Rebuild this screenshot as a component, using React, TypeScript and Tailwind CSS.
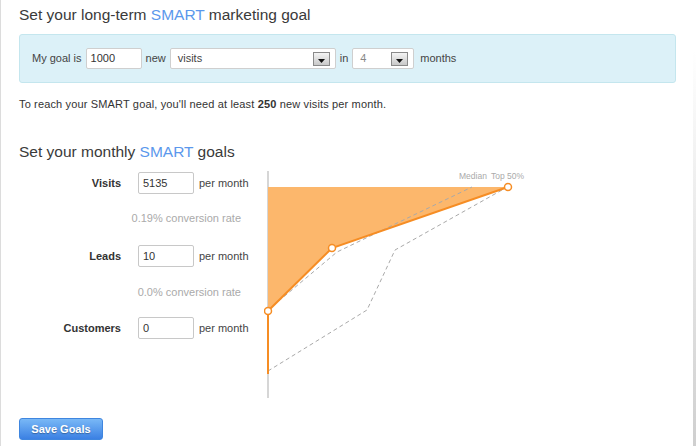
import { ReactNode } from "react";

const font = { fontFamily: '"Liberation Sans", Arial, sans-serif' };

const SelectArrow = () => (
  <span className="flex h-[14px] w-[17px] items-end justify-center border border-[#8a8a8a] bg-gradient-to-b from-[#f4f4f4] to-[#c9c9c9] pb-[2px]">
    <svg width="7" height="4" viewBox="0 0 7 4">
      <path d="M0 0h7L3.5 4z" fill="#111" />
    </svg>
  </span>
);

const FakeSelect = ({ value, width, muted }: { value: string; width: string; muted?: boolean }) => (
  <div className={`flex h-[21px] items-center justify-between rounded-[2px] border border-[#cfcfcf] bg-white pl-[7px] pr-[5px] ${width}`}>
    <span className={muted ? "text-[#888]" : "text-[#444]"}>{value}</span>
    <SelectArrow />
  </div>
);

const Title = ({ children }: { children: ReactNode }) => (
  <h2 className="h-[20px] text-[15.5px] leading-[20px] text-[#3a3a3a]">{children}</h2>
);

const GoalRow = ({ label, value }: { label: string; value: string }) => (
  <div className="flex h-[22px] items-center">
    <span className="w-[102px] text-right text-[11px] font-bold text-[#333]">{label}</span>
    <div className="ml-[17px] flex h-[22px] w-[56px] items-center rounded-[2px] border border-[#c8c8c8] bg-white px-[4px] text-[11px] text-[#333]">
      {value}
    </div>
    <span className="ml-[5px] text-[11px] text-[#444]">per month</span>
  </div>
);

const Rate = ({ text, className }: { text: string; className: string }) => (
  <div className={`flex h-[14px] w-[222px] items-center justify-end text-[11px] text-[#aaa] ${className}`}>{text}</div>
);

const Chart = () => (
  <svg width="270" height="234" viewBox="0 0 270 234" className="-mt-[3px] ml-[-3px]">
    <line x1="4" y1="3" x2="4" y2="230" stroke="#c8c8c8" strokeWidth="1.5" />
    <polygon points="4,19 244,19 68,80 4,143" fill="#fcb76c" />
    <polyline points="4,142 73,84 208,19" fill="none" stroke="#a9a9a9" strokeWidth="1" strokeDasharray="4 3" />
    <polyline points="4,203 103,142 131,82 238,22" fill="none" stroke="#a9a9a9" strokeWidth="1" strokeDasharray="4 3" />
    <polyline points="4,206 4,143 68,80 244,19" fill="none" stroke="#f68d24" strokeWidth="2" />
    <circle cx="4" cy="143" r="3.5" fill="#fff" stroke="#f68d24" strokeWidth="1.5" />
    <circle cx="68" cy="80" r="3.5" fill="#fff" stroke="#f68d24" strokeWidth="1.5" />
    <circle cx="244" cy="19" r="3.5" fill="#fff" stroke="#f68d24" strokeWidth="1.5" />
    <text x="195" y="11" fontSize="8.5" fill="#aaa" style={font}>Median</text>
    <text x="227" y="11" fontSize="8.5" fill="#aaa" style={font}>Top 50%</text>
  </svg>
);

export default function App() {
  return (
    <div className="flex h-[446px] w-[696px] bg-white" style={font}>
      <div className="w-px bg-[#dcdcdc]" />
      <div className="flex w-[692px] flex-col pl-[18px] pt-[5px]">
        <Title>
          Set your long-term <span className="text-[#5b98ec]">SMART</span> marketing goal
        </Title>

        <div className="mt-[9px] flex h-[49px] w-[657px] items-center rounded-[3px] border border-[#c4e6ee] bg-[#dcf1f8] pl-[12px] text-[11px] text-[#444]">
          <span>My goal is</span>
          <div className="ml-[4px] flex h-[21px] w-[56px] items-center rounded-[2px] border border-[#cfcfcf] bg-white px-[4px] text-[#333]">
            1000
          </div>
          <span className="ml-[4px]">new</span>
          <div className="ml-[4px]">
            <FakeSelect value="visits" width="w-[166px]" />
          </div>
          <span className="ml-[4px]">in</span>
          <div className="ml-[4px]">
            <FakeSelect value="4" width="w-[62px]" muted />
          </div>
          <span className="ml-[6px]">months</span>
        </div>

        <p className="mt-[14px] h-[14px] text-[11px] leading-[14px] tracking-[0.15px] text-[#333]">
          To reach your SMART goal, you'll need at least <b>250</b> new visits per month.
        </p>

        <div className="mt-[31px]">
          <Title>
            Set your monthly <span className="text-[#5b98ec]">SMART</span> goals
          </Title>
        </div>

        <div className="mt-[9px] flex">
          <div className="flex w-[248px] flex-col pt-[1px]">
            <GoalRow label="Visits" value="5135" />
            <Rate text="0.19% conversion rate" className="mt-[17px]" />
            <div className="mt-[20px]">
              <GoalRow label="Leads" value="10" />
            </div>
            <Rate text="0.0% conversion rate" className="mt-[18px]" />
            <div className="mt-[18px]">
              <GoalRow label="Customers" value="0" />
            </div>
          </div>
          <Chart />
        </div>

        <button className="mt-[16px] h-[22px] w-[84px] rounded-[3px] border border-[#3f86df] bg-gradient-to-b from-[#79b8f6] to-[#3b80e3] text-[11px] font-bold text-white [text-shadow:0_1px_1px_rgba(0,0,0,0.3)]">
          Save Goals
        </button>
      </div>
      <div className="mt-[50px] w-[3px] bg-gradient-to-b from-white to-[#cfcfcf]" />
    </div>
  );
}
